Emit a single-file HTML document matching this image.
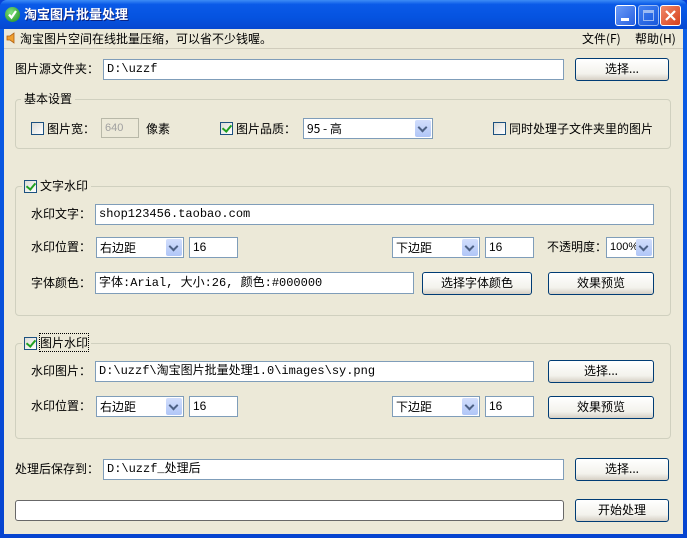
<!DOCTYPE html>
<html><head><meta charset="utf-8">
<style>
*{box-sizing:border-box;margin:0;padding:0}
body{width:687px;height:538px;overflow:hidden;background:#0842d8;font-family:"Noto Sans CJK SC","Liberation Sans",sans-serif;font-size:12px;color:#000}
#win{position:absolute;left:0;top:0;width:687px;height:538px;background:linear-gradient(#0a5fe8,#0644d0);border-radius:7px 7px 0 0}
#title{position:absolute;left:0;top:0;width:687px;height:29px;border-radius:7px 7px 0 0;background:linear-gradient(#3d8cf5 0%,#0a5ae8 15%,#0553e0 60%,#0648d0 100%)}
#title .t{position:absolute;left:24px;top:6px;color:#fff;font-weight:bold;font-size:13px;line-height:16px;text-shadow:1px 1px #0a1e7a}
#ico{position:absolute;left:5px;top:7px;width:15px;height:15px;border-radius:50%;background:radial-gradient(circle at 40% 35%,#7fe07f,#1a8a1a);}
.tb{position:absolute;top:5px;width:21px;height:21px;border:1px solid #fff;border-radius:3px;background:linear-gradient(135deg,#6a9bf8,#2760e0)}
#client{position:absolute;left:4px;top:29px;width:679px;height:505px;background:#ECE9D8}
.a{position:absolute;white-space:nowrap;line-height:14px}
.in{position:absolute;background:#fff;border:1px solid #7F9DB9;font-family:"Liberation Mono","Noto Sans CJK SC",monospace;font-size:12px;line-height:14px;padding:2px 0 0 3px;white-space:nowrap;overflow:hidden}
.btn{position:absolute;border:1px solid #003C74;border-radius:3px;background:linear-gradient(#fff,#f3f2ec 70%,#d6d0c5);text-align:center;line-height:20px}
.sel{position:absolute;background:#fff;border:1px solid #7F9DB9;padding:3px 0 0 3px;line-height:13px}
.sel i{position:absolute;right:1px;top:1px;width:16px;bottom:1px;background:linear-gradient(#d2defc,#b0c6f7);border-radius:2px}
.sel i:after{content:"";position:absolute;left:4px;top:4px;width:5px;height:5px;border-right:2px solid #4d6185;border-bottom:2px solid #4d6185;transform:rotate(45deg)}
.cb{position:absolute;width:13px;height:13px;border:1px solid #1C5180;background:linear-gradient(135deg,#dcdcd6,#fff)}
.cb.on:after{content:"";position:absolute;left:3px;top:0px;width:4px;height:7px;border-right:2px solid #21a121;border-bottom:2px solid #21a121;transform:rotate(40deg)}
.grp{position:absolute;border:1px solid #D0D0BF;border-radius:4px}
.gl{position:absolute;background:#ECE9D8;padding:0 3px}
.n{font-family:"Liberation Sans",sans-serif}
</style></head><body>
<div id="win">
<div id="title"><div id="ico"><svg width="15" height="15" style="position:absolute;left:0;top:0"><path d="M4 7.5 L6.5 10.5 L11 4" stroke="#fff" stroke-width="2.2" fill="none"/></svg></div><div class="t">淘宝图片批量处理</div>
<div class="tb" style="left:615px"><div style="position:absolute;left:5px;top:12px;width:8px;height:3px;background:#fff"></div></div>
<div class="tb" style="left:638px;opacity:.6"><div style="position:absolute;left:4px;top:4px;width:11px;height:11px;border:1px solid #fff;border-top-width:3px"></div></div>
<div class="tb" style="left:660px;background:linear-gradient(135deg,#f0896a,#d6401c)"><svg width="19" height="19"><path d="M5 5 L14 14 M14 5 L5 14" stroke="#fff" stroke-width="2.2"/></svg></div>
</div>
<div id="client">
<svg class="a" style="left:2px;top:3px" width="12" height="12"><path d="M1 4h3l4-3v10l-4-3H1z" fill="#f0a030" stroke="#b06010" stroke-width=".8"/></svg>
<div class="a" style="left:16px;top:3px">淘宝图片空间在线批量压缩，可以省不少钱喔。</div>
<div class="a" style="left:578px;top:3px">文件(F)</div>
<div class="a" style="left:631px;top:3px">帮助(H)</div>
<div style="position:absolute;left:0;top:19px;width:679px;height:1px;background:#fff;border-top:1px solid #d0ccbc"></div>

<div class="a" style="left:11px;top:33px">图片源文件夹：</div>
<div class="in" style="left:99px;top:30px;width:461px;height:21px">D:\uzzf</div>
<div class="btn" style="left:571px;top:29px;width:94px;height:23px">选择...</div>

<div class="grp" style="left:11px;top:70px;width:656px;height:50px"></div>
<div class="gl a" style="left:17px;top:63px">基本设置</div>
<div class="cb" style="left:27px;top:93px"></div>
<div class="a" style="left:43px;top:93px">图片宽：</div>
<div class="in n" style="left:97px;top:89px;width:38px;height:20px;border-color:#b8b8a8;background:#ECE9D8;color:#a0a0a0;font-family:'Liberation Sans';font-size:11px">640</div>
<div class="a" style="left:142px;top:93px">像素</div>
<div class="cb on" style="left:216px;top:93px"></div>
<div class="a" style="left:232px;top:93px">图片品质：</div>
<div class="sel" style="left:299px;top:89px;width:130px;height:21px">95 - 高<i></i></div>
<div class="cb" style="left:489px;top:93px"></div>
<div class="a" style="left:505px;top:93px">同时处理子文件夹里的图片</div>

<div class="grp" style="left:11px;top:157px;width:656px;height:130px"></div>
<div class="gl a" style="left:18px;top:150px;padding-left:2px"><span style="display:inline-block;width:16px"></span>文字水印</div>
<div class="cb on" style="left:20px;top:151px"></div>
<div class="a" style="left:27px;top:178px">水印文字：</div>
<div class="in" style="left:91px;top:175px;width:559px;height:21px">shop123456.taobao.com</div>
<div class="a" style="left:27px;top:211px">水印位置：</div>
<div class="sel" style="left:92px;top:208px;width:88px;height:21px">右边距<i></i></div>
<div class="in n" style="left:185px;top:208px;width:49px;height:21px;font-family:'Liberation Sans'">16</div>
<div class="sel" style="left:388px;top:208px;width:88px;height:21px">下边距<i></i></div>
<div class="in n" style="left:481px;top:208px;width:49px;height:21px;font-family:'Liberation Sans'">16</div>
<div class="a" style="left:543px;top:211px">不透明度：</div>
<div class="sel n" style="left:602px;top:208px;width:48px;height:21px;font-size:11px">100%<i></i></div>
<div class="a" style="left:27px;top:247px">字体颜色：</div>
<div class="in" style="left:91px;top:243px;width:319px;height:22px;padding-top:3px">字体:Arial, 大小:26, 颜色:#000000</div>
<div class="btn" style="left:418px;top:243px;width:110px;height:23px">选择字体颜色</div>
<div class="btn" style="left:544px;top:243px;width:106px;height:23px">效果预览</div>

<div class="grp" style="left:11px;top:314px;width:656px;height:96px"></div>
<div class="gl a" style="left:18px;top:307px;padding-left:2px"><span style="display:inline-block;width:16px"></span><span style="outline:1px dotted #000">图片水印</span></div>
<div class="cb on" style="left:20px;top:308px"></div>
<div class="a" style="left:27px;top:335px">水印图片：</div>
<div class="in" style="left:91px;top:332px;width:439px;height:21px">D:\uzzf\淘宝图片批量处理1.0\images\sy.png</div>
<div class="btn" style="left:544px;top:331px;width:106px;height:23px">选择...</div>
<div class="a" style="left:27px;top:370px">水印位置：</div>
<div class="sel" style="left:92px;top:367px;width:88px;height:21px">右边距<i></i></div>
<div class="in n" style="left:185px;top:367px;width:49px;height:21px;font-family:'Liberation Sans'">16</div>
<div class="sel" style="left:388px;top:367px;width:88px;height:21px">下边距<i></i></div>
<div class="in n" style="left:481px;top:367px;width:49px;height:21px;font-family:'Liberation Sans'">16</div>
<div class="btn" style="left:544px;top:367px;width:106px;height:23px">效果预览</div>

<div class="a" style="left:11px;top:433px">处理后保存到：</div>
<div class="in" style="left:99px;top:430px;width:461px;height:21px">D:\uzzf_处理后</div>
<div class="btn" style="left:571px;top:429px;width:94px;height:23px">选择...</div>
<div style="position:absolute;left:11px;top:471px;width:549px;height:21px;border:1px solid #686868;border-radius:3px;background:#fff"></div>
<div class="btn" style="left:571px;top:470px;width:94px;height:23px">开始处理</div>
</div>
</div>
</body></html>
